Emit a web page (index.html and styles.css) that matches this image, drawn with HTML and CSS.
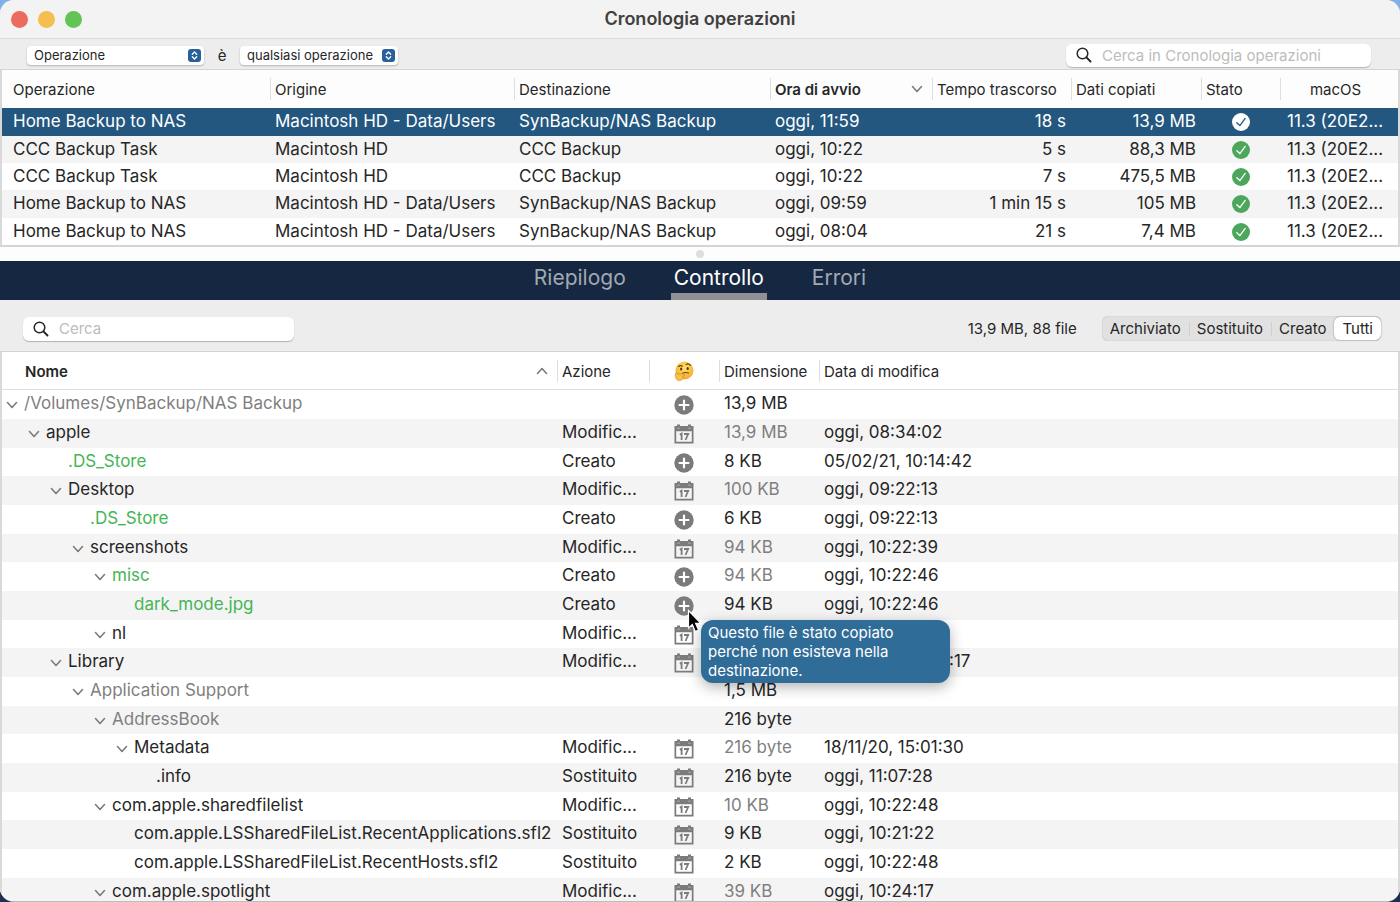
FILE: index.html
```
<!DOCTYPE html>
<html lang="it">

<head>
    <meta charset="UTF-8">
    <meta name="viewport" content="width=device-width, initial-scale=1.0">
    <title>Cronologia operazioni</title>
    <link rel="stylesheet" href="styles.css">
</head>

<body>

    <!-- ----------- shared icons ---------------- -->

    <svg class="sprite" aria-hidden="true">
        <symbol id="check" viewBox="0 0 18 18">
            <circle cx="9" cy="9" r="9" fill="currentColor" />
            <path class="tick" d="M4.8 9.8 L7.9 12.6 L13.2 5.4" />
        </symbol>
        <symbol id="plus" viewBox="0 0 20 20">
            <circle cx="10" cy="10" r="9.7" fill="#7b7b7b" />
            <path d="M10 5.500v9M5.500 10h9" stroke="#fff" stroke-width="2.2" stroke-linecap="round" />
        </symbol>
        <symbol id="cal" viewBox="0 0 20 20">
            <path fill="#7b7b7b" fill-rule="evenodd" d="M0.5 2H3V0.5h3V2h8V0.5h3V2h2.500V19.500H0.500ZM2.200 7.200V17.800H17.800V7.200Z" />
            <path d="M3 4.200h3M14 4.200h3" stroke="#aaa" stroke-width="1" />
            <path fill="none" stroke="#7b7b7b" stroke-width="1.800" d="M5.800 10.800L7.600 9.700V16M10 10H14.200L11.500 16" />
        </symbol>
        <symbol id="down" viewBox="0 0 12 12">
            <path d="M1.500 3.500L6 8.500L10.500 3.500" fill="none" stroke="currentColor" stroke-width="1.600" stroke-linecap="round" stroke-linejoin="round" />
        </symbol>
        <symbol id="lens" viewBox="0 0 16 16">
            <circle cx="6.500" cy="6.500" r="5.300" fill="none" stroke="#262626" stroke-width="1.500" />
            <path d="M10.400 10.400L14.500 14.500" stroke="#262626" stroke-width="2" stroke-linecap="round" />
        </symbol>
        <symbol id="updown" viewBox="0 0 13 13">
            <rect width="13" height="13" rx="3" fill="#27609b" />
            <path d="M4.300 5.200L6.500 3L8.700 5.200M4.300 7.800L6.500 10L8.700 7.800" fill="none" stroke="#fff" stroke-width="1.300" stroke-linecap="round" stroke-linejoin="round" />
        </symbol>
    </svg>

    <div class="window">

        <!-- ----------- title bar ---------------- -->

        <header class="titlebar">
            <div class="lights">
                <button class="light red" aria-label="Chiudi"></button>
                <button class="light yellow" aria-label="Riduci"></button>
                <button class="light green" aria-label="Ingrandisci"></button>
            </div>
            <h1>Cronologia operazioni</h1>
        </header>

        <!-- ----------- filter ---------------- -->

        <div class="filter">
            <div class="popup popup-field">
                <select aria-label="Campo">
                    <option>Operazione</option>
                </select>
                <svg><use href="#updown" /></svg>
            </div>
            <span class="is">è</span>
            <div class="popup popup-value">
                <select aria-label="Valore">
                    <option>qualsiasi operazione</option>
                </select>
                <svg><use href="#updown" /></svg>
            </div>
            <label class="search search-history">
                <svg><use href="#lens" /></svg>
                <input type="text" placeholder="Cerca in Cronologia operazioni" aria-label="Cerca in Cronologia operazioni">
            </label>
        </div>

        <!-- ----------- history table ---------------- -->

        <div class="pane">
            <table class="list history">
                <colgroup>
                    <col>
                    <col class="w-source">
                    <col class="w-dest">
                    <col class="w-start">
                    <col class="w-elapsed">
                    <col class="w-copied">
                    <col class="w-status">
                    <col class="w-os">
                </colgroup>
                <thead>
                    <tr>
                        <th>Operazione</th>
                        <th>Origine</th>
                        <th>Destinazione</th>
                        <th class="sorted"><div>Ora di avvio <svg><use href="#down" /></svg></div></th>
                        <th>Tempo trascorso</th>
                        <th>Dati copiati</th>
                        <th>Stato</th>
                        <th class="os">macOS</th>
                    </tr>
                </thead>
                <tbody>
                    <tr class="selected">
                        <td>Home Backup to NAS</td>
                        <td>Macintosh HD - Data/Users</td>
                        <td>SynBackup/NAS Backup</td>
                        <td>oggi, 11:59</td>
                        <td class="num">18 s</td>
                        <td class="num">13,9 MB</td>
                        <td class="status"><svg><use href="#check" /></svg></td>
                        <td>11.3 (20E2...</td>
                    </tr>
                    <tr>
                        <td>CCC Backup Task</td>
                        <td>Macintosh HD</td>
                        <td>CCC Backup</td>
                        <td>oggi, 10:22</td>
                        <td class="num">5 s</td>
                        <td class="num">88,3 MB</td>
                        <td class="status"><svg><use href="#check" /></svg></td>
                        <td>11.3 (20E2...</td>
                    </tr>
                    <tr>
                        <td>CCC Backup Task</td>
                        <td>Macintosh HD</td>
                        <td>CCC Backup</td>
                        <td>oggi, 10:22</td>
                        <td class="num">7 s</td>
                        <td class="num">475,5 MB</td>
                        <td class="status"><svg><use href="#check" /></svg></td>
                        <td>11.3 (20E2...</td>
                    </tr>
                    <tr>
                        <td>Home Backup to NAS</td>
                        <td>Macintosh HD - Data/Users</td>
                        <td>SynBackup/NAS Backup</td>
                        <td>oggi, 09:59</td>
                        <td class="num">1 min 15 s</td>
                        <td class="num">105 MB</td>
                        <td class="status"><svg><use href="#check" /></svg></td>
                        <td>11.3 (20E2...</td>
                    </tr>
                    <tr>
                        <td>Home Backup to NAS</td>
                        <td>Macintosh HD - Data/Users</td>
                        <td>SynBackup/NAS Backup</td>
                        <td>oggi, 08:04</td>
                        <td class="num">21 s</td>
                        <td class="num">7,4 MB</td>
                        <td class="status"><svg><use href="#check" /></svg></td>
                        <td>11.3 (20E2...</td>
                    </tr>
                </tbody>
            </table>
        </div>

        <div class="splitter"><span></span></div>

        <!-- ----------- tabs ---------------- -->

        <nav class="tabs">
            <button>Riepilogo</button>
            <button class="active">Controllo</button>
            <button>Errori</button>
        </nav>

        <!-- ----------- audit toolbar ---------------- -->

        <div class="toolbar">
            <label class="search search-audit">
                <svg><use href="#lens" /></svg>
                <input type="text" placeholder="Cerca" aria-label="Cerca">
            </label>
            <span class="summary">13,9 MB, 88 file</span>
            <div class="segments">
                <button>Archiviato</button>
                <button>Sostituito</button>
                <button>Creato</button>
                <button class="on">Tutti</button>
            </div>
        </div>

        <!-- ----------- audit table ---------------- -->

        <div class="pane audit-pane">
            <table class="list audit">
                <colgroup>
                    <col class="w-name">
                    <col class="w-action">
                    <col class="w-why">
                    <col class="w-size">
                    <col>
                </colgroup>
                <thead>
                    <tr>
                        <th class="sorted"><div>Nome <svg class="up"><use href="#down" /></svg></div></th>
                        <th>Azione</th>
                        <th class="center">
                            <svg class="think" viewBox="0 0 20 20" role="img" aria-label="Motivo">
                                <defs>
                                    <radialGradient id="skin" cx="50%" cy="35%" r="65%">
                                        <stop offset="0" stop-color="#ffe568" />
                                        <stop offset="1" stop-color="#f3a72c" />
                                    </radialGradient>
                                </defs>
                                <circle cx="10.500" cy="9.500" r="9" fill="url(#skin)" />
                                <path d="M4.500 5.500Q6.500 4 8.500 5.200M12 3.600Q14.500 2 16.500 4.300M8.500 12.300Q11.500 10.800 14.500 12" fill="none" stroke="#6b3d10" stroke-width="1.100" stroke-linecap="round" />
                                <ellipse cx="7.200" cy="8" rx="1.100" ry="1.500" fill="#593111" />
                                <ellipse cx="13.700" cy="7.500" rx="1.100" ry="1.500" fill="#593111" />
                                <path d="M1.500 12.500C2 11 3.500 11.500 3.800 13.200L9.500 12.800C11 12.800 11 14.300 9.800 14.500L8.500 15C10 16.500 8.500 19.500 5.500 19.500C2.500 19.500 1 17 1.500 12.500Z" fill="#fbc343" stroke="#cf8423" stroke-width="0.700" />
                            </svg>
                        </th>
                        <th>Dimensione</th>
                        <th>Data di modifica</th>
                    </tr>
                </thead>
                <tbody>
                    <tr>
                        <td class="name lv0 dim"><button aria-label="Comprimi"><svg><use href="#down" /></svg></button>/Volumes/SynBackup/NAS Backup</td>
                        <td></td>
                        <td class="why"><svg><use href="#plus" /></svg></td>
                        <td>13,9 MB</td>
                        <td></td>
                    </tr>
                    <tr>
                        <td class="name lv1"><button aria-label="Comprimi"><svg><use href="#down" /></svg></button>apple</td>
                        <td>Modific...</td>
                        <td class="why"><svg><use href="#cal" /></svg></td>
                        <td class="dim">13,9 MB</td>
                        <td>oggi, 08:34:02</td>
                    </tr>
                    <tr>
                        <td class="name lv2 leaf new">.DS_Store</td>
                        <td>Creato</td>
                        <td class="why"><svg><use href="#plus" /></svg></td>
                        <td>8 KB</td>
                        <td>05/02/21, 10:14:42</td>
                    </tr>
                    <tr>
                        <td class="name lv2"><button aria-label="Comprimi"><svg><use href="#down" /></svg></button>Desktop</td>
                        <td>Modific...</td>
                        <td class="why"><svg><use href="#cal" /></svg></td>
                        <td class="dim">100 KB</td>
                        <td>oggi, 09:22:13</td>
                    </tr>
                    <tr>
                        <td class="name lv3 leaf new">.DS_Store</td>
                        <td>Creato</td>
                        <td class="why"><svg><use href="#plus" /></svg></td>
                        <td>6 KB</td>
                        <td>oggi, 09:22:13</td>
                    </tr>
                    <tr>
                        <td class="name lv3"><button aria-label="Comprimi"><svg><use href="#down" /></svg></button>screenshots</td>
                        <td>Modific...</td>
                        <td class="why"><svg><use href="#cal" /></svg></td>
                        <td class="dim">94 KB</td>
                        <td>oggi, 10:22:39</td>
                    </tr>
                    <tr>
                        <td class="name lv4 new"><button aria-label="Comprimi"><svg><use href="#down" /></svg></button>misc</td>
                        <td>Creato</td>
                        <td class="why"><svg><use href="#plus" /></svg></td>
                        <td class="dim">94 KB</td>
                        <td>oggi, 10:22:46</td>
                    </tr>
                    <tr>
                        <td class="name lv5 leaf new">dark_mode.jpg</td>
                        <td>Creato</td>
                        <td class="why">
                            <svg><use href="#plus" /></svg>
                            <div class="tooltip" role="tooltip">Questo file è stato copiato perché non esisteva nella destinazione.</div>
                            <svg class="cursor" viewBox="0 0 16 24">
                                <path d="M1.500 1.500V19L5.300 15.600L8.300 22.500L11.600 21L8.600 14.300H13.800Z" fill="#000" stroke="#fff" stroke-width="1.200" />
                            </svg>
                        </td>
                        <td>94 KB</td>
                        <td>oggi, 10:22:46</td>
                    </tr>
                    <tr>
                        <td class="name lv4"><button aria-label="Comprimi"><svg><use href="#down" /></svg></button>nl</td>
                        <td>Modific...</td>
                        <td class="why"><svg><use href="#cal" /></svg></td>
                        <td></td>
                        <td></td>
                    </tr>
                    <tr>
                        <td class="name lv2"><button aria-label="Comprimi"><svg><use href="#down" /></svg></button>Library</td>
                        <td>Modific...</td>
                        <td class="why"><svg><use href="#cal" /></svg></td>
                        <td></td>
                        <td>05/02/21, 10:24:17</td>
                    </tr>
                    <tr>
                        <td class="name lv3 dim"><button aria-label="Comprimi"><svg><use href="#down" /></svg></button>Application Support</td>
                        <td></td>
                        <td></td>
                        <td>1,5 MB</td>
                        <td></td>
                    </tr>
                    <tr>
                        <td class="name lv4 dim"><button aria-label="Comprimi"><svg><use href="#down" /></svg></button>AddressBook</td>
                        <td></td>
                        <td></td>
                        <td>216 byte</td>
                        <td></td>
                    </tr>
                    <tr>
                        <td class="name lv5"><button aria-label="Comprimi"><svg><use href="#down" /></svg></button>Metadata</td>
                        <td>Modific...</td>
                        <td class="why"><svg><use href="#cal" /></svg></td>
                        <td class="dim">216 byte</td>
                        <td>18/11/20, 15:01:30</td>
                    </tr>
                    <tr>
                        <td class="name lv6 leaf">.info</td>
                        <td>Sostituito</td>
                        <td class="why"><svg><use href="#cal" /></svg></td>
                        <td>216 byte</td>
                        <td>oggi, 11:07:28</td>
                    </tr>
                    <tr>
                        <td class="name lv4"><button aria-label="Comprimi"><svg><use href="#down" /></svg></button>com.apple.sharedfilelist</td>
                        <td>Modific...</td>
                        <td class="why"><svg><use href="#cal" /></svg></td>
                        <td class="dim">10 KB</td>
                        <td>oggi, 10:22:48</td>
                    </tr>
                    <tr>
                        <td class="name lv5 leaf">com.apple.LSSharedFileList.RecentApplications.sfl2</td>
                        <td>Sostituito</td>
                        <td class="why"><svg><use href="#cal" /></svg></td>
                        <td>9 KB</td>
                        <td>oggi, 10:21:22</td>
                    </tr>
                    <tr>
                        <td class="name lv5 leaf">com.apple.LSSharedFileList.RecentHosts.sfl2</td>
                        <td>Sostituito</td>
                        <td class="why"><svg><use href="#cal" /></svg></td>
                        <td>2 KB</td>
                        <td>oggi, 10:22:48</td>
                    </tr>
                    <tr>
                        <td class="name lv4"><button aria-label="Comprimi"><svg><use href="#down" /></svg></button>com.apple.spotlight</td>
                        <td>Modific...</td>
                        <td class="why"><svg><use href="#cal" /></svg></td>
                        <td class="dim">39 KB</td>
                        <td>oggi, 10:24:17</td>
                    </tr>
                </tbody>
            </table>
        </div>

    </div>
</body>

</html>
```
FILE: styles.css
```
* {
    box-sizing: border-box;
    padding: 0;
    margin: 0;
}

body {
    height: 100vh;
    overflow: hidden;
    background: linear-gradient(to bottom, #7fb0e6 0%, #1d3050 100%);
    font-family: Inter, "Liberation Sans", sans-serif;
    color: #262626;
}

button,
input,
select {
    font-family: inherit;
    color: inherit;
    border: none;
    outline: none;
    background: none;
}

.sprite {
    position: absolute;
    width: 0;
    height: 0;
}

.window {
    height: 100vh;
    display: flex;
    flex-direction: column;
    overflow: hidden;
    border-radius: 14px;
    border-bottom: 1px solid #bdbdbd;
    background: #ededed;
}

/* title bar */

.titlebar {
    flex: none;
    height: 39px;
    display: grid;
    grid-template-columns: 1fr auto 1fr;
    align-items: center;
    padding: 0 11px;
    background: #f2f3f2;
    border-bottom: 1px solid #d9d9d9;
}

.titlebar h1 {
    font-size: 18px;
    line-height: 20px;
    font-weight: 600;
    color: #404040;
}

.lights {
    display: flex;
    gap: 10px;
}

.light {
    width: 17px;
    height: 17px;
    border-radius: 50%;
}

.red {
    background: #ec6a5e;
}

.yellow {
    background: #f4bf50;
}

.green {
    background: #61c455;
}

/* filter */

.filter {
    flex: none;
    height: 31px;
    display: flex;
    align-items: center;
    padding: 2px 29px 0 27px;
    border-bottom: 1px solid #d4d4d4;
}

.popup {
    position: relative;
    height: 19px;
    border-radius: 4px;
    background: #fff;
    box-shadow: 0 1px 2px rgba(0, 0, 0, 0.25);
}

.popup select {
    appearance: none;
    display: block;
    width: 100%;
    height: 19px;
    padding: 0 20px 0 7px;
    font-size: 13px;
}

.popup svg {
    position: absolute;
    right: 3px;
    top: 3px;
    width: 13px;
    height: 13px;
    pointer-events: none;
}

.popup-field {
    width: 177px;
}

.popup-value {
    width: 158px;
}

.is {
    width: 36px;
    text-align: center;
    font-size: 15px;
}

.search {
    display: flex;
    align-items: center;
    gap: 10px;
    padding: 0 10px;
    border-radius: 6px;
    background: #fff;
    box-shadow: 0 1px 1px rgba(0, 0, 0, 0.25);
}

.search svg {
    flex: none;
    width: 16px;
    height: 16px;
}

.search input {
    flex: 1;
    min-width: 0;
    font-size: 15px;
}

.search input::placeholder {
    color: #bcbcbc;
    opacity: 1;
}

.search-history {
    width: 305px;
    height: 23px;
    margin-left: auto;
}

.search-audit {
    width: 271px;
    height: 24px;
}

/* lists */

.pane {
    flex: none;
    background: #fff;
    border: 1px solid #d9d9d9;
    border-width: 0 2px;
}

.list {
    width: 100%;
    table-layout: fixed;
    border-collapse: collapse;
}

.list th {
    position: relative;
    height: 38px;
    padding: 0 5px;
    font-size: 15px;
    font-weight: 400;
    text-align: left;
    white-space: nowrap;
    background: #fdfdfd;
}

/* column separators stop short of the header edges */
.list th + th::before {
    content: "";
    position: absolute;
    left: 0;
    top: 8px;
    bottom: 8px;
    width: 1px;
    background: #dedede;
}

.list .center {
    text-align: center;
}

.list .sorted {
    font-weight: 600;
}

.sorted div {
    display: flex;
    align-items: center;
    justify-content: space-between;
}

.sorted svg {
    width: 12px;
    height: 12px;
    margin-right: 4px;
    color: #7b7b7b;
}

.sorted .up {
    transform: scaleY(-1);
}

.list td {
    padding: 0 5px;
    font-size: 17px;
    line-height: 27px;
    vertical-align: top;
    white-space: nowrap;
}

.list td svg {
    display: block;
}

.history th:first-child,
.history td:first-child {
    padding-left: 11px;
}

.history .os {
    padding-right: 12px;
    text-align: center;
}

.history td:last-child {
    padding-left: 7px;
}

.history tbody tr:nth-child(3n + 1) {
    height: 28px;
}

.history tbody tr:nth-child(even) {
    background: #f4f4f4;
}

.history .selected {
    background: #23577f;
    color: #fff;
}

.list .num {
    text-align: right;
}

.status svg {
    --tick: #fff;
    width: 18px;
    height: 18px;
    margin: 5px auto 0;
    color: #4ca65b;
}

.tick {
    fill: none;
    stroke: var(--tick);
    stroke-width: 1.3px;
    stroke-linecap: round;
}

.selected .status svg {
    --tick: #23577f;
    color: #fff;
}

.w-source { width: 244px; }
.w-dest { width: 256px; }
.w-start { width: 162px; }
.w-elapsed { width: 139px; }
.w-copied { width: 130px; }
.w-status { width: 79px; }
.w-os { width: 118px; }

.splitter {
    flex: none;
    height: 16px;
    display: flex;
    align-items: center;
    justify-content: center;
    background: #fdfdfd;
    border-top: 2px solid #d4d4d4;
}

.splitter span {
    width: 8px;
    height: 8px;
    border-radius: 50%;
    background: #dedede;
}

/* tabs */

.tabs {
    flex: none;
    height: 39px;
    display: flex;
    justify-content: center;
    gap: 42px;
    background: #162841;
}

.tabs button {
    padding: 0 3px;
    border-bottom: 7px solid transparent;
    font-size: 21px;
    color: #a2a9b3;
}

.tabs .active {
    color: #fff;
    border-color: #919195;
}

/* audit toolbar */

.toolbar {
    flex: none;
    height: 52px;
    display: flex;
    align-items: center;
    padding: 6px 19px 0 23px;
    border-bottom: 1px solid #d4d4d4;
}

.summary {
    margin-left: auto;
    margin-right: 25px;
    font-size: 15px;
}

.segments {
    display: flex;
    align-items: center;
    height: 25px;
    border-radius: 6px;
    background: #e1e1e1;
    box-shadow: inset 0 0 1px rgba(0, 0, 0, 0.3);
}

.segments button {
    height: 23px;
    padding: 0 8px;
    font-size: 15px;
}

.segments button + button:not(.on) {
    background: linear-gradient(#cfcfcf, #cfcfcf) left center / 1px 14px no-repeat;
}

.segments .on {
    border-radius: 6px;
    background: #fff;
    box-shadow: 0 0 2px rgba(0, 0, 0, 0.4);
}

/* audit table */

.audit-pane {
    flex: 1 0 auto;
}

.audit th {
    background: #fff;
    box-shadow: inset 0 -1px #dedede;
}

.audit th:first-child {
    padding-left: 23px;
}

.audit tbody tr {
    height: 29px;
}

.audit tbody tr:nth-child(3n) {
    height: 28px;
}

.audit tbody tr:nth-child(even) {
    background: #f4f4f4;
}

.name button {
    display: inline-block;
    width: 12px;
    height: 12px;
    margin-right: 6px;
    color: #7b7b7b;
    vertical-align: -2px;
}

.name svg {
    width: 12px;
    height: 12px;
}

.audit .dim {
    color: #7f7f7f;
}

.audit .new {
    color: #45b556;
}

/* 22px per level */
.audit .lv0 { padding-left: 4px; }
.audit .lv1 { padding-left: 26px; }
.audit .lv2 { padding-left: 48px; }
.audit .lv3 { padding-left: 70px; }
.audit .lv4 { padding-left: 92px; }
.audit .lv5 { padding-left: 114px; }
.audit .lv6 { padding-left: 136px; }

/* leaves have no arrow */
.leaf::before {
    content: "";
    display: inline-block;
    width: 18px;
}

.why {
    position: relative;
}

.why svg {
    width: 20px;
    height: 20px;
    margin: 5px auto 0;
}

.think {
    width: 20px;
    height: 20px;
    vertical-align: middle;
}

.why .cursor {
    position: absolute;
    left: 38px;
    top: 18px;
    width: 16px;
    height: 24px;
    margin: 0;
    z-index: 2;
}

.tooltip {
    position: absolute;
    left: 52px;
    top: 29px;
    z-index: 1;
    width: 249px;
    padding: 3px 7px;
    border-radius: 12px;
    background: #306c98;
    box-shadow: 0 4px 14px rgba(0, 0, 0, 0.3);
    color: #fff;
    font-size: 15px;
    line-height: 19px;
    white-space: normal;
}

.w-name { width: 555px; }
.w-action { width: 92px; }
.w-why { width: 70px; }
.w-size { width: 100px; }
```
